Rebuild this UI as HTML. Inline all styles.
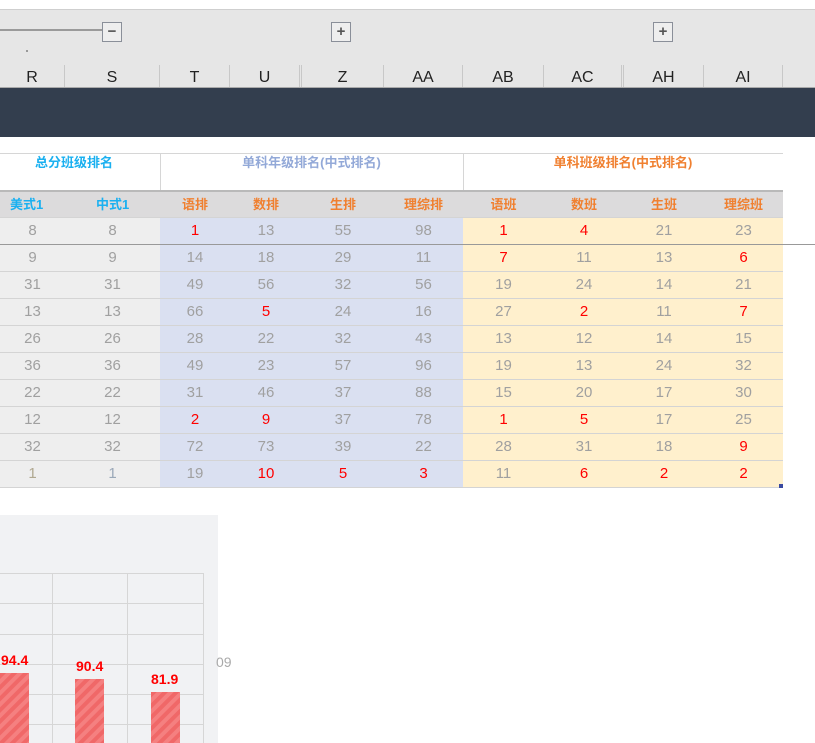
<!DOCTYPE html><html><head><meta charset="utf-8"><style>
*{margin:0;padding:0;box-sizing:border-box}
body{width:815px;height:743px;background:#fff;position:relative;overflow:hidden;font-family:"Liberation Sans","Noto Sans CJK SC",sans-serif}
.a{position:absolute}
.top{left:0;top:9px;width:815px;height:79px;background:#e6e6e6;border-top:1px solid #cfcfcf}
.btn{position:absolute;width:20px;height:20px;border:1px solid #8a8f99;background:#eee;font-size:15px;line-height:17px;text-align:center;color:#555;font-weight:bold}
.hdr{position:absolute;top:65px;height:23px;font-size:16px;color:#222;text-align:center;line-height:25px;border-right:1px solid #c8c8c8}
table{border-collapse:collapse;table-layout:fixed;position:absolute;left:0;top:190px;width:783px}
td{height:27px;text-align:center;font-size:15px;color:#a0a0a0;border-bottom:1px solid #d4d4d4;padding:0}
tr.h td{background:#dcdbdc;font-size:13px;font-weight:bold;border-top:2px solid #b9b9b9;height:26px;padding-bottom:2px}
td.g{background:#eeeeee}td.b{background:#dae0f1}td.y{background:#fff0cd}
.r{color:#f00!important}
</style></head><body>
<div class="a top"></div>
<div class="a" style="left:0;top:29px;width:104px;height:2px;background:#9a9a9a"></div>
<div class="btn" style="left:102px;top:22px">−</div>
<div class="btn" style="left:331px;top:22px">+</div>
<div class="btn" style="left:653px;top:22px">+</div>
<div class="a" style="left:26px;top:50px;width:2px;height:2px;background:#999"></div>
<div class="hdr" style="left:0;width:65px">R</div>
<div class="hdr" style="left:65px;width:95px">S</div>
<div class="hdr" style="left:160px;width:70px">T</div>
<div class="hdr" style="left:230px;width:72px;border-right:3px double #c8c8c8">U</div>
<div class="hdr" style="left:302px;width:82px">Z</div>
<div class="hdr" style="left:384px;width:79px">AA</div>
<div class="hdr" style="left:463px;width:81px">AB</div>
<div class="hdr" style="left:544px;width:80px;border-right:3px double #c8c8c8">AC</div>
<div class="hdr" style="left:624px;width:80px">AH</div>
<div class="hdr" style="left:704px;width:79px">AI</div>
<div class="a" style="left:0;top:87px;width:815px;height:1px;background:#aaa"></div>
<div class="a" style="left:0;top:88px;width:815px;height:49px;background:#333e4e"></div>
<div class="a" style="left:0;top:153px;width:783px;height:1px;background:#d6d6d6"></div>
<div class="a" style="left:160px;top:153px;width:1px;height:37px;background:#d6d6d6"></div>
<div class="a" style="left:463px;top:153px;width:1px;height:37px;background:#d6d6d6"></div>
<div class="a" style="left:35px;top:152px;font-size:13px;font-weight:bold;color:#1ab0f0">总分班级排名</div>
<div class="a" style="left:160px;top:152px;width:303px;text-align:center;font-size:13px;font-weight:bold;color:#93a9d8">单科年级排名(中式排名)</div>
<div class="a" style="left:463px;top:152px;width:320px;text-align:center;font-size:13px;font-weight:bold;color:#f08030">单科班级排名(中式排名)</div>
<table>
<colgroup><col style="width:65px"><col style="width:95px"><col style="width:70px"><col style="width:72px"><col style="width:82px"><col style="width:79px"><col style="width:81px"><col style="width:80px"><col style="width:80px"><col style="width:79px"></colgroup>
<tr class="h"><td style="color:#1ab0f0;text-align:left;padding-left:10px">美式1</td><td style="color:#1ab0f0;text-align:left;padding-left:31px">中式1</td><td style="color:#f08030">语排</td><td style="color:#f08030">数排</td><td style="color:#f08030">生排</td><td style="color:#f08030">理综排</td><td style="color:#f08030">语班</td><td style="color:#f08030">数班</td><td style="color:#f08030">生班</td><td style="color:#f08030">理综班</td></tr>
<tr><td class="g">8</td><td class="g">8</td><td class="b r">1</td><td class="b">13</td><td class="b">55</td><td class="b">98</td><td class="y r">1</td><td class="y r">4</td><td class="y">21</td><td class="y">23</td></tr>
<tr><td class="g">9</td><td class="g">9</td><td class="b">14</td><td class="b">18</td><td class="b">29</td><td class="b">11</td><td class="y r">7</td><td class="y">11</td><td class="y">13</td><td class="y r">6</td></tr>
<tr><td class="g">31</td><td class="g">31</td><td class="b">49</td><td class="b">56</td><td class="b">32</td><td class="b">56</td><td class="y">19</td><td class="y">24</td><td class="y">14</td><td class="y">21</td></tr>
<tr><td class="g">13</td><td class="g">13</td><td class="b">66</td><td class="b r">5</td><td class="b">24</td><td class="b">16</td><td class="y">27</td><td class="y r">2</td><td class="y">11</td><td class="y r">7</td></tr>
<tr><td class="g">26</td><td class="g">26</td><td class="b">28</td><td class="b">22</td><td class="b">32</td><td class="b">43</td><td class="y">13</td><td class="y">12</td><td class="y">14</td><td class="y">15</td></tr>
<tr><td class="g">36</td><td class="g">36</td><td class="b">49</td><td class="b">23</td><td class="b">57</td><td class="b">96</td><td class="y">19</td><td class="y">13</td><td class="y">24</td><td class="y">32</td></tr>
<tr><td class="g">22</td><td class="g">22</td><td class="b">31</td><td class="b">46</td><td class="b">37</td><td class="b">88</td><td class="y">15</td><td class="y">20</td><td class="y">17</td><td class="y">30</td></tr>
<tr><td class="g">12</td><td class="g">12</td><td class="b r">2</td><td class="b r">9</td><td class="b">37</td><td class="b">78</td><td class="y r">1</td><td class="y r">5</td><td class="y">17</td><td class="y">25</td></tr>
<tr><td class="g">32</td><td class="g">32</td><td class="b">72</td><td class="b">73</td><td class="b">39</td><td class="b">22</td><td class="y">28</td><td class="y">31</td><td class="y">18</td><td class="y r">9</td></tr>
<tr><td class="g" style="color:#b0a890">1</td><td class="g" style="color:#9aa8b8">1</td><td class="b">19</td><td class="b r">10</td><td class="b r">5</td><td class="b r">3</td><td class="y">11</td><td class="y r">6</td><td class="y r">2</td><td class="y r">2</td></tr>
</table>
<div class="a" style="left:0;top:244px;width:815px;height:1px;background:#999"></div>
<div class="a" style="left:779px;top:484px;width:4px;height:4px;background:#3a4aa0"></div>
<div class="a" style="left:0;top:515px;width:218px;height:228px;background:#f1f2f4"></div>
<svg class="a" style="left:0;top:515px" width="218" height="228">
<defs><pattern id="p" width="8" height="8" patternUnits="userSpaceOnUse" patternTransform="rotate(45)"><rect width="8" height="8" fill="#f58080"/><rect width="4" height="8" fill="#f06868"/></pattern></defs>
<g stroke="#d6d6d6" stroke-width="1" fill="none">
<line x1="0" y1="58.5" x2="203" y2="58.5"/><line x1="0" y1="88.5" x2="203" y2="88.5"/><line x1="0" y1="119.5" x2="203" y2="119.5"/><line x1="0" y1="149.5" x2="203" y2="149.5"/><line x1="0" y1="179.5" x2="203" y2="179.5"/><line x1="0" y1="209.5" x2="203" y2="209.5"/>
<line x1="52.5" y1="58" x2="52.5" y2="228"/><line x1="127.5" y1="58" x2="127.5" y2="228"/><line x1="203.5" y1="58" x2="203.5" y2="228"/></g>
<rect x="0" y="158" width="29" height="70" fill="url(#p)"/>
<rect x="75" y="164" width="29" height="64" fill="url(#p)"/>
<rect x="151" y="177" width="29" height="51" fill="url(#p)"/>
<g fill="#f00" font-weight="bold" font-size="14" font-family="Liberation Sans,sans-serif">
<text x="1" y="150">94.4</text><text x="76" y="156">90.4</text><text x="151" y="169">81.9</text></g>
<text x="-3" y="28" font-size="12" fill="#1a6fb0">:</text>
</svg>
<div class="a" style="left:216px;top:654px;font-size:14px;color:#aaa">09</div>
</body></html>
